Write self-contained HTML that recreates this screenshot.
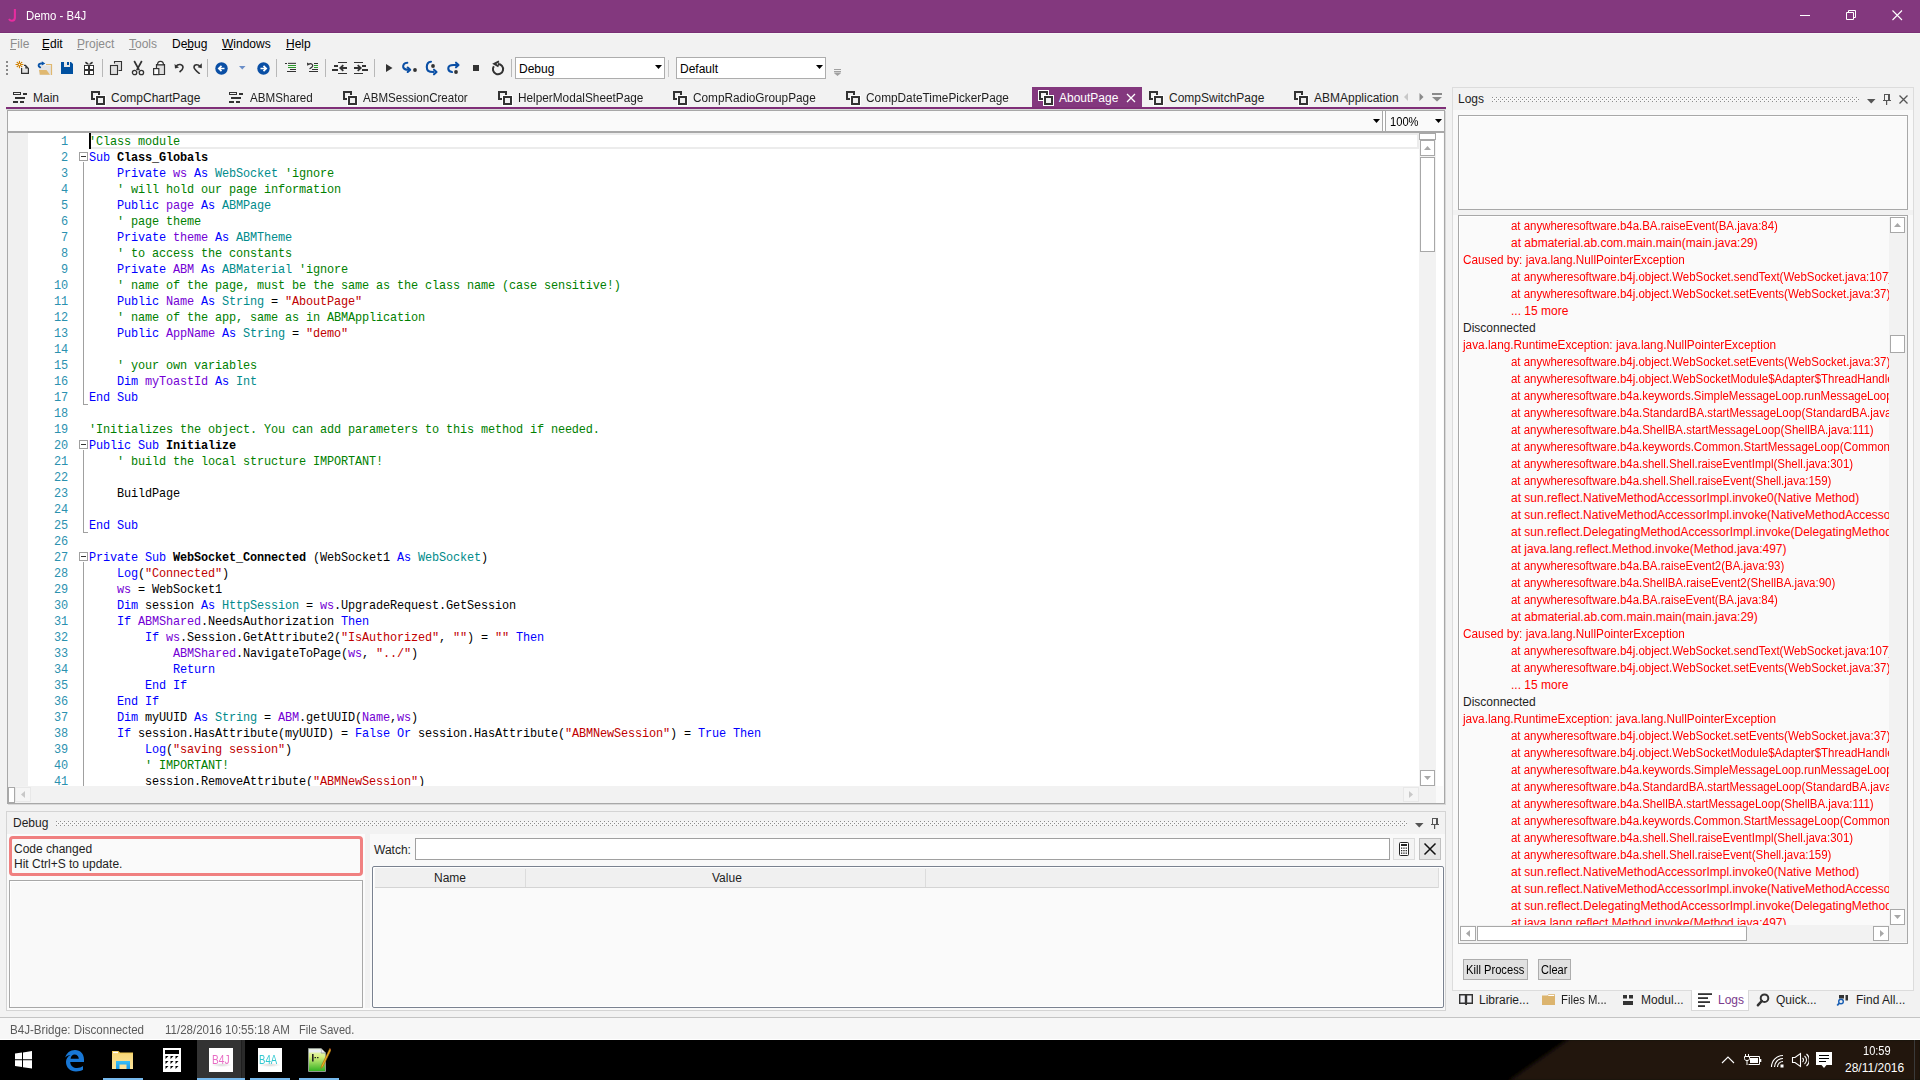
<!DOCTYPE html><html><head><meta charset="utf-8"><title>Demo - B4J</title><style>
*{margin:0;padding:0;box-sizing:border-box}
html,body{width:1920px;height:1080px;overflow:hidden;background:#f2f2f2}
body{position:relative;font-family:"Liberation Sans",sans-serif;font-size:12px;color:#000}
div,span,svg{position:absolute}
.ts{font-family:"Liberation Sans",sans-serif;line-height:1.117;white-space:pre;margin-top:1px}
.tm{font-family:"Liberation Mono",monospace;line-height:1.133;white-space:pre}
.code{left:89px;font-family:"Liberation Mono",monospace;font-size:11.88px;letter-spacing:-0.128px;white-space:pre;height:16px;line-height:16px}
.code i{font-style:normal}
.k{color:#0000ff}.v{color:#7400d4}.t{color:#008b8b}.c{color:#008000}.s{color:#c00000}.b{font-weight:bold;color:#000}.n{color:#000}
.ln{left:20px;width:48px;text-align:right;font-family:"Liberation Mono",monospace;font-size:11.88px;letter-spacing:-0.128px;color:#2b91af;height:16px;line-height:16px;white-space:pre}
.log{font-family:"Liberation Sans",sans-serif;font-size:12px;white-space:pre;height:17px;line-height:17px;color:#ff0000}
</style></head><body>
<div style="left:0px;top:0px;width:1920px;height:33px;background:#83387e"></div>
<div style="left:0px;top:32px;width:1920px;height:1px;background:#7a2f75"></div>
<div style="left:0px;top:33px;width:1920px;height:1px;background:#f6f8f6"></div>
<svg style="left:7px;top:8px" width="12" height="14"><path d="M7.9 1V9.5C7.9 12 6.8 12.7 5 12.7C3.5 12.7 2.6 12 2 11" stroke="#e62d9f" stroke-width="2.1" fill="none"/></svg>
<span class="ts" style="left:26px;top:9.14px;font-size:12px;color:#fff;transform:scaleX(0.95);transform-origin:0 0">Demo - B4J</span>
<svg style="left:1800px;top:15px" width="11" height="1" viewBox="0 0 11 1"><rect x="0" y="0" width="10" height="1" fill="#fff"/></svg><svg style="left:1846px;top:10px" width="11" height="11" viewBox="0 0 11 11"><path d="M0.5 2.5H7.5V9.5H0.5Z M2.5 2.5V0.5H9.5V7.5H7.5" stroke="#fff" fill="none"/></svg><svg style="left:1892px;top:10px" width="11" height="11" viewBox="0 0 11 11"><path d="M0.5 0.5L10 10M10 0.5L0.5 10" stroke="#fff" stroke-width="1.1" fill="none"/></svg>
<span class="ts" style="left:10px;top:37.14px;font-size:12px;color:#8c8c8c">File</span>
<span class="ts" style="left:42px;top:37.14px;font-size:12px;color:#000">Edit</span>
<span class="ts" style="left:77px;top:37.14px;font-size:12px;color:#8c8c8c">Project</span>
<span class="ts" style="left:129px;top:37.14px;font-size:12px;color:#8c8c8c">Tools</span>
<span class="ts" style="left:172px;top:37.14px;font-size:12px;color:#000">Debug</span>
<span class="ts" style="left:222px;top:37.14px;font-size:12px;color:#000">Windows</span>
<span class="ts" style="left:286px;top:37.14px;font-size:12px;color:#000">Help</span>
<div style="left:10px;top:49px;width:6px;height:1px;background:#8c8c8c"></div>
<div style="left:42px;top:49px;width:7px;height:1px;background:#000"></div>
<div style="left:77px;top:49px;width:7px;height:1px;background:#8c8c8c"></div>
<div style="left:129px;top:49px;width:7px;height:1px;background:#8c8c8c"></div>
<div style="left:186px;top:49px;width:7px;height:1px;background:#000"></div>
<div style="left:222px;top:49px;width:11px;height:1px;background:#000"></div>
<div style="left:286px;top:49px;width:8px;height:1px;background:#000"></div>
<div style="left:6px;top:61px;width:2px;height:2px;background:#8a8a8a"></div><div style="left:6px;top:65px;width:2px;height:2px;background:#8a8a8a"></div><div style="left:6px;top:69px;width:2px;height:2px;background:#8a8a8a"></div><div style="left:6px;top:73px;width:2px;height:2px;background:#8a8a8a"></div><svg style="left:15px;top:60px" width="16" height="16" viewBox="0 0 16 16"><g stroke="#d08000" stroke-width="1.1" stroke-linecap="round"><path d="M4.45 1.2V3M4.45 6V7.8M1 4.5H2.8M6.2 4.5H8"/></g><g fill="#d08000"><circle cx="2.3" cy="2.4" r="0.75"/><circle cx="6.6" cy="2.4" r="0.75"/><circle cx="2.3" cy="6.6" r="0.75"/><circle cx="6.6" cy="6.6" r="0.75"/></g><circle cx="4.45" cy="4.5" r="1.4" fill="#fff" stroke="#d08000" stroke-width="1.1"/><path d="M6.6 8.2H13.4V13.4H6.6Z" fill="#e4e4e4"/><path d="M9 5.5H10.5L13.4 8.3" fill="#e4e4e4"/><path d="M6.6 8V13.4H13.4V8.4L10.5 5.4H9" fill="none" stroke="#333" stroke-width="1.2"/><path d="M10.3 5.8L13 8.5H10.3Z" fill="#333"/></svg><svg style="left:37px;top:60px" width="16" height="16" viewBox="0 0 16 16"><path d="M2 5.5H14.5V15H2Z" fill="#e4e4e4"/><path d="M9 4.5H14.5V15" fill="none" stroke="#e0b870" stroke-width="1.2"/><path d="M2 10H9.5L13 14.8H3Z" fill="#e0b870"/><path d="M3.2 7.3C0.8 6.5 1 3.8 4 3.5L5.5 3.4" stroke="#0a54a8" stroke-width="1.9" fill="none" stroke-linecap="round"/><path d="M4.8 1.2L8.3 3.4L4.8 5.6Z" fill="#0a54a8"/></svg><svg style="left:61px;top:62px" width="13" height="13" viewBox="0 0 13 13"><path d="M0 0H10L12 2V12H0Z" fill="#0050a0"/><rect x="3" y="0" width="6" height="5" fill="#e8e8e8"/><rect x="6" y="0" width="2" height="3" fill="#0050a0"/></svg><svg style="left:83px;top:60px" width="12" height="16" viewBox="0 0 12 16"><path d="M6 4.5C4.5 2 2 0.8 2.2 2.8C2.4 4.3 4.5 4.6 6 4.5C7.5 4.6 9.6 4.3 9.8 2.8C10 0.8 7.5 2 6 4.5Z" fill="#333"/><rect x="1" y="5" width="10" height="10" fill="#333"/><rect x="2" y="6" width="3" height="3" fill="#fff"/><rect x="7" y="6" width="3" height="3" fill="#fff"/><rect x="2" y="11" width="3" height="3" fill="#fff"/><rect x="7" y="11" width="3" height="3" fill="#fff"/></svg><div style="left:102px;top:59px;width:1px;height:18px;background:#b8b8b8"></div><svg style="left:109px;top:60px" width="14" height="16" viewBox="0 0 14 16"><path d="M5.5 3.5V1.5H12.5V10.5H9.5" fill="#e0e0e0" stroke="#333" stroke-width="1.1"/><rect x="1.5" y="5.5" width="7" height="9" fill="#e0e0e0" stroke="#333" stroke-width="1.1"/></svg><svg style="left:131px;top:60px" width="14" height="16" viewBox="0 0 14 16"><path d="M3.2 1L8.2 10.2M10.8 1L5.8 10.2" stroke="#333" stroke-width="1.7"/><circle cx="3.6" cy="12.5" r="2.2" fill="none" stroke="#333" stroke-width="1.3"/><circle cx="10.4" cy="12.5" r="2.2" fill="none" stroke="#333" stroke-width="1.3"/></svg><svg style="left:152px;top:60px" width="14" height="16" viewBox="0 0 14 16"><path d="M4.5 8V4.5H12.5V14.5H7" fill="#e0e0e0" stroke="#333" stroke-width="1.2"/><path d="M5.5 4.8C5.5 2.5 6.5 1.3 8.5 1.3C10.5 1.3 11.5 2.5 11.5 4.8Z" fill="#fff" stroke="#333" stroke-width="1.2"/><rect x="1.6" y="8.6" width="5.2" height="6" fill="#fff" stroke="#333" stroke-width="1.2"/></svg><svg style="left:174px;top:62px" width="11" height="11" viewBox="0 0 11 11"><path d="M2 4.5C4 1.5 9 2 9 5.5C9 7.5 7.5 8.5 5.5 10" stroke="#333" stroke-width="1.6" fill="none"/><path d="M0.5 2L1 6.5L5 5.5Z" fill="#333"/></svg><svg style="left:192px;top:62px" width="11" height="12" viewBox="0 0 11 12"><path d="M7.8 4.5C6.5 2.2 2.2 2 2 5.2C2 7 3.5 8.3 7.8 11.8" stroke="#333" stroke-width="1.6" fill="none"/><path d="M9.8 1.2L9.8 6.3L5.6 5.2Z" fill="#333"/></svg><div style="left:207px;top:59px;width:1px;height:18px;background:#b8b8b8"></div><svg style="left:215px;top:62px" width="13" height="13" viewBox="0 0 13 13"><circle cx="6.5" cy="6.5" r="6.2" fill="#0a4fa5"/><path d="M9.5 6.5H4M6.5 3.8L3.8 6.5L6.5 9.2" stroke="#fff" stroke-width="1.7" fill="none"/></svg><svg style="left:239px;top:66px" width="7" height="4" viewBox="0 0 7 4"><path d="M0 0H6.5L3.25 3.5Z" fill="#6a8ec8"/></svg><svg style="left:257px;top:62px" width="13" height="13" viewBox="0 0 13 13"><circle cx="6.5" cy="6.5" r="6.2" fill="#0a4fa5"/><path d="M3.5 6.5H9M6.5 3.8L9.2 6.5L6.5 9.2" stroke="#fff" stroke-width="1.7" fill="none"/></svg><div style="left:276px;top:59px;width:1px;height:18px;background:#b8b8b8"></div><svg style="left:284px;top:62px" width="13" height="11" viewBox="0 0 13 11"><rect x="1" y="1" width="2" height="1" fill="#333"/><rect x="4" y="1" width="8" height="1" fill="#333"/><rect x="4" y="3" width="8" height="1" fill="#2a9a2a"/><rect x="4" y="5" width="8" height="1" fill="#2a9a2a"/><rect x="6" y="7" width="6" height="1" fill="#333"/><rect x="3" y="9" width="9" height="1" fill="#333"/><rect x="4" y="0.7" width="8" height="0.6" fill="#888"/></svg><svg style="left:306px;top:62px" width="12" height="11" viewBox="0 0 12 11"><path d="M3.2 1.8C5.5 1.3 7.2 2.5 6.6 4.3C6.2 5.4 4.5 6.2 3.5 6.8" stroke="#333" stroke-width="1.2" fill="none"/><path d="M1 0.5L1.2 3.8L4.2 2.2Z" fill="#333"/><rect x="8" y="1" width="4" height="1" fill="#333"/><rect x="8" y="3" width="4" height="1" fill="#2a9a2a"/><rect x="8" y="5" width="4" height="1" fill="#2a9a2a"/><rect x="6" y="7" width="6" height="1" fill="#333"/><rect x="3" y="9" width="9" height="1" fill="#333"/></svg><div style="left:325px;top:59px;width:1px;height:18px;background:#b8b8b8"></div><svg style="left:331px;top:61px" width="17" height="14" viewBox="0 0 17 14"><rect x="7" y="1" width="9" height="1" fill="#333"/><rect x="7" y="12" width="9" height="1" fill="#333"/><rect x="3" y="4" width="4" height="2" fill="#333"/><rect x="1" y="8" width="6" height="2" fill="#333"/><path d="M16 7H9.5M12.3 4.2L9.3 7L12.3 9.8" stroke="#333" stroke-width="1.8" fill="none"/></svg><svg style="left:353px;top:61px" width="17" height="14" viewBox="0 0 17 14"><rect x="1" y="1" width="9" height="1" fill="#333"/><rect x="1" y="12" width="9" height="1" fill="#333"/><rect x="9" y="4" width="4" height="2" fill="#333"/><rect x="9" y="8" width="6" height="2" fill="#333"/><path d="M1 7H7.5M4.7 4.2L7.7 7L4.7 9.8" stroke="#333" stroke-width="1.8" fill="none"/></svg><div style="left:374px;top:59px;width:1px;height:18px;background:#b8b8b8"></div><svg style="left:385px;top:63px" width="8" height="10" viewBox="0 0 8 10"><path d="M1 1L7.5 5L1 9Z" fill="#333"/></svg><svg style="left:398px;top:58px" width="64" height="20" viewBox="0 0 64 20"><g stroke="#0a4fa5" stroke-width="2.1" fill="none" stroke-linecap="round" stroke-linejoin="round"><path d="M9.3 4.7C6 4.8 5 7 5.2 9C5.5 11 7.5 11.8 11 11.7"/><path d="M9.7 9.5L12.2 11.7L9.7 14"/><path d="M33 3.7C29.5 4 28.8 6.5 28.8 9C28.8 12.5 30.2 14 35.5 14"/><path d="M36 11.7L38.5 14L36 16.3"/><path d="M54 14C51 13.5 50.2 11.5 50.3 10C50.5 8 52 7 55.5 7H60"/><path d="M58 4.7L60.5 7L58 9.3"/></g><circle cx="17" cy="12" r="1.9" fill="#333"/><circle cx="35" cy="8" r="1.9" fill="#333"/><circle cx="58" cy="14" r="1.9" fill="#333"/></svg><svg style="left:473px;top:65px" width="7" height="7" viewBox="0 0 7 7"><rect width="6" height="6" fill="#333"/></svg><svg style="left:490px;top:60px" width="16" height="17" viewBox="0 0 16 17"><path d="M8 4.1A5.1 5.1 0 1 1 3.82 6.27" stroke="#333" stroke-width="2" fill="none"/><path d="M9 1.4L4.3 3.8L8.6 6.3" stroke="#333" stroke-width="2" fill="none" stroke-linejoin="miter"/></svg><div style="left:511px;top:59px;width:1px;height:18px;background:#b8b8b8"></div>
<div style="left:515px;top:57px;width:150px;height:22px;background:#fff;border:1px solid #adadad"></div>
<span class="ts" style="left:519px;top:62.14px;font-size:12px;">Debug</span>
<svg style="left:655px;top:65px" width="8" height="5"><path d="M0 0H7L3.5 4Z" fill="#000"/></svg>
<div style="left:668px;top:60px;width:1px;height:17px;background:#c8c8c8"></div>
<div style="left:676px;top:57px;width:150px;height:22px;background:#fff;border:1px solid #adadad"></div>
<span class="ts" style="left:680px;top:62.14px;font-size:12px;">Default</span>
<svg style="left:816px;top:65px" width="8" height="5"><path d="M0 0H7L3.5 4Z" fill="#000"/></svg>
<svg style="left:834px;top:69px" width="8" height="7"><path d="M0 0.5H7M0 2.5H7M0.5 4H6.5L3.5 6.5Z" stroke="#a0a0a0" stroke-width="1" fill="#a0a0a0"/></svg>
<div style="left:1032px;top:87px;width:110px;height:20px;background:#83387e"></div><svg style="left:13px;top:92px" width="15" height="12" viewBox="0 0 15 12"><rect x="0.5" y="0.5" width="7" height="2" fill="none" stroke="#333"/><rect x="10" y="1" width="4" height="2" fill="#333"/><rect x="2" y="5" width="10" height="2" fill="#333"/><rect x="0" y="9" width="5" height="2" fill="#333"/><rect x="7" y="9" width="4" height="2" fill="#333"/></svg><span class="ts" style="left:33px;top:91.14px;font-size:12px;color:#1e1e1e">Main</span><svg style="left:90px;top:90px" width="16" height="16" viewBox="0 0 16 16"><rect x="2" y="2" width="7" height="7" fill="#f0f0f0" stroke="#333" stroke-width="2"/><rect x="5" y="5" width="11" height="11" fill="#fff"/><rect x="7" y="7" width="7" height="7" fill="#f0f0f0" stroke="#333" stroke-width="2"/></svg><span class="ts" style="left:111px;top:91.14px;font-size:12px;color:#1e1e1e">CompChartPage</span><svg style="left:229px;top:92px" width="15" height="12" viewBox="0 0 15 12"><rect x="0.5" y="0.5" width="7" height="2" fill="none" stroke="#333"/><rect x="10" y="1" width="4" height="2" fill="#333"/><rect x="2" y="5" width="10" height="2" fill="#333"/><rect x="0" y="9" width="5" height="2" fill="#333"/><rect x="7" y="9" width="4" height="2" fill="#333"/></svg><span class="ts" style="left:250px;top:91.14px;font-size:12px;color:#1e1e1e;transform:scaleX(0.969);transform-origin:0 0">ABMShared</span><svg style="left:342px;top:90px" width="16" height="16" viewBox="0 0 16 16"><rect x="2" y="2" width="7" height="7" fill="#f0f0f0" stroke="#333" stroke-width="2"/><rect x="5" y="5" width="11" height="11" fill="#fff"/><rect x="7" y="7" width="7" height="7" fill="#f0f0f0" stroke="#333" stroke-width="2"/></svg><span class="ts" style="left:363px;top:91.14px;font-size:12px;color:#1e1e1e;transform:scaleX(0.963);transform-origin:0 0">ABMSessionCreator</span><svg style="left:497px;top:90px" width="16" height="16" viewBox="0 0 16 16"><rect x="2" y="2" width="7" height="7" fill="#f0f0f0" stroke="#333" stroke-width="2"/><rect x="5" y="5" width="11" height="11" fill="#fff"/><rect x="7" y="7" width="7" height="7" fill="#f0f0f0" stroke="#333" stroke-width="2"/></svg><span class="ts" style="left:518px;top:91.14px;font-size:12px;color:#1e1e1e;transform:scaleX(0.984);transform-origin:0 0">HelperModalSheetPage</span><svg style="left:672px;top:90px" width="16" height="16" viewBox="0 0 16 16"><rect x="2" y="2" width="7" height="7" fill="#f0f0f0" stroke="#333" stroke-width="2"/><rect x="5" y="5" width="11" height="11" fill="#fff"/><rect x="7" y="7" width="7" height="7" fill="#f0f0f0" stroke="#333" stroke-width="2"/></svg><span class="ts" style="left:693px;top:91.14px;font-size:12px;color:#1e1e1e;transform:scaleX(0.984);transform-origin:0 0">CompRadioGroupPage</span><svg style="left:845px;top:90px" width="16" height="16" viewBox="0 0 16 16"><rect x="2" y="2" width="7" height="7" fill="#f0f0f0" stroke="#333" stroke-width="2"/><rect x="5" y="5" width="11" height="11" fill="#fff"/><rect x="7" y="7" width="7" height="7" fill="#f0f0f0" stroke="#333" stroke-width="2"/></svg><span class="ts" style="left:866px;top:91.14px;font-size:12px;color:#1e1e1e;transform:scaleX(0.986);transform-origin:0 0">CompDateTimePickerPage</span><svg style="left:1037px;top:90px" width="17" height="17" viewBox="0 0 17 17"><rect x="1" y="0" width="11" height="11" fill="#fff"/><rect x="6" y="5" width="11" height="11" fill="#fff"/><rect x="3" y="2" width="7" height="7" fill="#f0f0f0" stroke="#333" stroke-width="2"/><rect x="6" y="5" width="11" height="11" fill="#fff"/><rect x="8" y="7" width="7" height="7" fill="#f0f0f0" stroke="#333" stroke-width="2"/></svg><span class="ts" style="left:1059px;top:91.14px;font-size:12px;color:#fff">AboutPage</span><svg style="left:1148px;top:90px" width="16" height="16" viewBox="0 0 16 16"><rect x="2" y="2" width="7" height="7" fill="#f0f0f0" stroke="#333" stroke-width="2"/><rect x="5" y="5" width="11" height="11" fill="#fff"/><rect x="7" y="7" width="7" height="7" fill="#f0f0f0" stroke="#333" stroke-width="2"/></svg><span class="ts" style="left:1169px;top:91.14px;font-size:12px;color:#1e1e1e">CompSwitchPage</span><svg style="left:1293px;top:90px" width="16" height="16" viewBox="0 0 16 16"><rect x="2" y="2" width="7" height="7" fill="#f0f0f0" stroke="#333" stroke-width="2"/><rect x="5" y="5" width="11" height="11" fill="#fff"/><rect x="7" y="7" width="7" height="7" fill="#f0f0f0" stroke="#333" stroke-width="2"/></svg><div style="left:1314px;top:89px;width:85px;height:17px;overflow:hidden"><span class="ts" style="left:0;top:2.14px;font-size:12px;color:#1e1e1e">ABMApplication</span></div><svg style="left:1126px;top:93px" width="10" height="10" viewBox="0 0 10 10"><path d="M1 1L9 9M9 1L1 9" stroke="#fff" stroke-width="1.3"/></svg><svg style="left:1403px;top:93px" width="6" height="8" viewBox="0 0 6 8"><path d="M5 0V8L1 4Z" fill="#c8c8c8"/></svg><svg style="left:1419px;top:93px" width="6" height="8" viewBox="0 0 6 8"><path d="M0.5 0V8L4.5 4Z" fill="#8a8a8a"/></svg><svg style="left:1432px;top:93px" width="11" height="9" viewBox="0 0 11 9"><rect x="0" y="0" width="10" height="2" fill="#8a8a8a"/><path d="M0 4H10L5 8.5Z" fill="#8a8a8a"/></svg>
<div style="left:6px;top:107px;width:1440px;height:2px;background:#7f2f78"></div>
<div style="left:6px;top:109px;width:1440px;height:1px;background:#d6dad6"></div>
<div style="left:7px;top:110px;width:1438px;height:694px;background:#fafafa;border:1px solid #a8a8a8;box-shadow:1px 1px 0 #d8d8d8"></div>
<div style="left:8px;top:111px;width:1435px;height:20px;background:#fafafa"></div>
<div style="left:8px;top:131px;width:1436px;height:2px;background:#a8a8a8"></div>
<div style="left:1382px;top:111px;width:4px;height:20px;background:#fff;border-left:1px solid #a8a8a8;border-right:1px solid #a8a8a8"></div>
<svg style="left:1373px;top:119px" width="8" height="5"><path d="M0 0H7L3.5 4Z" fill="#000"/></svg>
<svg style="left:1435px;top:119px" width="8" height="5"><path d="M0 0H7L3.5 4Z" fill="#000"/></svg>
<span class="ts" style="left:1389.5px;top:115.14px;font-size:12px;transform:scaleX(0.93);transform-origin:0 0">100%</span>
<div style="left:8px;top:133px;width:1435px;height:653px;background:#fff"></div>
<div style="left:8px;top:133px;width:20px;height:653px;background:#f0f0f0"></div>
<div style="left:91px;top:133px;width:1328px;height:16px;border:2px solid #ececec;border-left:none"></div>
<div style="left:89px;top:133px;width:2px;height:16px;background:#000"></div>
<span class="ln" style="top:134.0px">1</span>
<span class="code" style="top:134.0px"><i class="c">'Class module</i></span>
<span class="ln" style="top:150.0px">2</span>
<span class="code" style="top:150.0px"><i class="k">Sub </i><i class="b">Class_Globals</i></span>
<span class="ln" style="top:166.0px">3</span>
<span class="code" style="top:166.0px"><i class="k">    Private </i><i class="v">ws </i><i class="k">As </i><i class="t">WebSocket </i><i class="c">'ignore</i></span>
<span class="ln" style="top:182.0px">4</span>
<span class="code" style="top:182.0px"><i class="c">    ' will hold our page information</i></span>
<span class="ln" style="top:198.0px">5</span>
<span class="code" style="top:198.0px"><i class="k">    Public </i><i class="v">page </i><i class="k">As </i><i class="t">ABMPage</i></span>
<span class="ln" style="top:214.0px">6</span>
<span class="code" style="top:214.0px"><i class="c">    ' page theme</i></span>
<span class="ln" style="top:230.0px">7</span>
<span class="code" style="top:230.0px"><i class="k">    Private </i><i class="v">theme </i><i class="k">As </i><i class="t">ABMTheme</i></span>
<span class="ln" style="top:246.0px">8</span>
<span class="code" style="top:246.0px"><i class="c">    ' to access the constants</i></span>
<span class="ln" style="top:262.0px">9</span>
<span class="code" style="top:262.0px"><i class="k">    Private </i><i class="v">ABM </i><i class="k">As </i><i class="t">ABMaterial </i><i class="c">'ignore</i></span>
<span class="ln" style="top:278.0px">10</span>
<span class="code" style="top:278.0px"><i class="c">    ' name of the page, must be the same as the class name (case sensitive!)</i></span>
<span class="ln" style="top:294.0px">11</span>
<span class="code" style="top:294.0px"><i class="k">    Public </i><i class="v">Name </i><i class="k">As </i><i class="t">String </i><i class="n">= </i><i class="s">"AboutPage"</i></span>
<span class="ln" style="top:310.0px">12</span>
<span class="code" style="top:310.0px"><i class="c">    ' name of the app, same as in ABMApplication</i></span>
<span class="ln" style="top:326.0px">13</span>
<span class="code" style="top:326.0px"><i class="k">    Public </i><i class="v">AppName </i><i class="k">As </i><i class="t">String </i><i class="n">= </i><i class="s">"demo"</i></span>
<span class="ln" style="top:342.0px">14</span>
<span class="ln" style="top:358.0px">15</span>
<span class="code" style="top:358.0px"><i class="c">    ' your own variables</i></span>
<span class="ln" style="top:374.0px">16</span>
<span class="code" style="top:374.0px"><i class="k">    Dim </i><i class="v">myToastId </i><i class="k">As </i><i class="t">Int</i></span>
<span class="ln" style="top:390.0px">17</span>
<span class="code" style="top:390.0px"><i class="k">End Sub</i></span>
<span class="ln" style="top:406.0px">18</span>
<span class="ln" style="top:422.0px">19</span>
<span class="code" style="top:422.0px"><i class="c">'Initializes the object. You can add parameters to this method if needed.</i></span>
<span class="ln" style="top:438.0px">20</span>
<span class="code" style="top:438.0px"><i class="k">Public Sub </i><i class="b">Initialize</i></span>
<span class="ln" style="top:454.0px">21</span>
<span class="code" style="top:454.0px"><i class="c">    ' build the local structure IMPORTANT!</i></span>
<span class="ln" style="top:470.0px">22</span>
<span class="ln" style="top:486.0px">23</span>
<span class="code" style="top:486.0px"><i class="n">    BuildPage</i></span>
<span class="ln" style="top:502.0px">24</span>
<span class="ln" style="top:518.0px">25</span>
<span class="code" style="top:518.0px"><i class="k">End Sub</i></span>
<span class="ln" style="top:534.0px">26</span>
<span class="ln" style="top:550.0px">27</span>
<span class="code" style="top:550.0px"><i class="k">Private Sub </i><i class="b">WebSocket_Connected</i><i class="n"> (WebSocket1 </i><i class="k">As </i><i class="t">WebSocket</i><i class="n">)</i></span>
<span class="ln" style="top:566.0px">28</span>
<span class="code" style="top:566.0px"><i class="k">    Log</i><i class="n">(</i><i class="s">"Connected"</i><i class="n">)</i></span>
<span class="ln" style="top:582.0px">29</span>
<span class="code" style="top:582.0px"><i class="v">    ws </i><i class="n">= WebSocket1</i></span>
<span class="ln" style="top:598.0px">30</span>
<span class="code" style="top:598.0px"><i class="k">    Dim </i><i class="n">session </i><i class="k">As </i><i class="t">HttpSession </i><i class="n">= </i><i class="v">ws</i><i class="n">.UpgradeRequest.GetSession</i></span>
<span class="ln" style="top:614.0px">31</span>
<span class="code" style="top:614.0px"><i class="k">    If </i><i class="v">ABMShared</i><i class="n">.NeedsAuthorization </i><i class="k">Then</i></span>
<span class="ln" style="top:630.0px">32</span>
<span class="code" style="top:630.0px"><i class="k">        If </i><i class="v">ws</i><i class="n">.Session.GetAttribute2(</i><i class="s">"IsAuthorized"</i><i class="n">, </i><i class="s">""</i><i class="n">) = </i><i class="s">""</i><i class="k"> Then</i></span>
<span class="ln" style="top:646.0px">33</span>
<span class="code" style="top:646.0px"><i class="v">            ABMShared</i><i class="n">.NavigateToPage(</i><i class="v">ws</i><i class="n">, </i><i class="s">"../"</i><i class="n">)</i></span>
<span class="ln" style="top:662.0px">34</span>
<span class="code" style="top:662.0px"><i class="k">            Return</i></span>
<span class="ln" style="top:678.0px">35</span>
<span class="code" style="top:678.0px"><i class="k">        End If</i></span>
<span class="ln" style="top:694.0px">36</span>
<span class="code" style="top:694.0px"><i class="k">    End If</i></span>
<span class="ln" style="top:710.0px">37</span>
<span class="code" style="top:710.0px"><i class="k">    Dim </i><i class="n">myUUID </i><i class="k">As </i><i class="t">String </i><i class="n">= </i><i class="v">ABM</i><i class="n">.getUUID(</i><i class="v">Name</i><i class="n">,</i><i class="v">ws</i><i class="n">)</i></span>
<span class="ln" style="top:726.0px">38</span>
<span class="code" style="top:726.0px"><i class="k">    If </i><i class="n">session.HasAttribute(myUUID) = </i><i class="k">False Or </i><i class="n">session.HasAttribute(</i><i class="s">"ABMNewSession"</i><i class="n">) = </i><i class="k">True Then</i></span>
<span class="ln" style="top:742.0px">39</span>
<span class="code" style="top:742.0px"><i class="k">        Log</i><i class="n">(</i><i class="s">"saving session"</i><i class="n">)</i></span>
<span class="ln" style="top:758.0px">40</span>
<span class="code" style="top:758.0px"><i class="c">        ' IMPORTANT!</i></span>
<span class="ln" style="top:774.0px">41</span>
<span class="code" style="top:774.0px"><i class="n">        session.RemoveAttribute(</i><i class="s">"ABMNewSession"</i><i class="n">)</i></span>
<div style="left:79px;top:152px;width:9px;height:9px;border:1px solid #a0a0a0;background:#fff"></div>
<div style="left:81px;top:156px;width:5px;height:1px;background:#333"></div>
<div style="left:83px;top:162px;width:1px;height:243px;background:#a0a0a0"></div>
<div style="left:83px;top:404px;width:5px;height:1px;background:#a0a0a0"></div>
<div style="left:79px;top:440px;width:9px;height:9px;border:1px solid #a0a0a0;background:#fff"></div>
<div style="left:81px;top:444px;width:5px;height:1px;background:#333"></div>
<div style="left:83px;top:450px;width:1px;height:83px;background:#a0a0a0"></div>
<div style="left:83px;top:532px;width:5px;height:1px;background:#a0a0a0"></div>
<div style="left:79px;top:552px;width:9px;height:9px;border:1px solid #a0a0a0;background:#fff"></div>
<div style="left:81px;top:556px;width:5px;height:1px;background:#333"></div>
<div style="left:83px;top:562px;width:1px;height:224px;background:#a0a0a0"></div>
<div style="left:1419px;top:133px;width:17px;height:653px;background:#f2f2f2"></div>
<div style="left:1436px;top:133px;width:7px;height:653px;background:#fff"></div>
<div style="left:1419px;top:133px;width:17px;height:7px;background:#fff;border:1px solid #a8a8a8"></div>
<div style="left:1420px;top:140px;width:15px;height:16px;background:#fff;border:1px solid #a8a8a8"></div>
<svg style="left:1424px;top:146px" width="7" height="4"><path d="M0 4L3.5 0L7 4Z" fill="#a8a8a8"/></svg>
<div style="left:1420px;top:157px;width:15px;height:95px;background:#fff;border:1px solid #a8a8a8"></div>
<div style="left:1420px;top:770px;width:15px;height:16px;background:#fff;border:1px solid #a8a8a8"></div>
<svg style="left:1424px;top:776px" width="7" height="4"><path d="M0 0L3.5 4L7 0Z" fill="#a8a8a8"/></svg>
<div style="left:8px;top:786px;width:1428px;height:17px;background:#f2f2f2"></div>
<div style="left:8px;top:787px;width:7px;height:16px;background:#fff;border:1px solid #a8a8a8"></div>
<div style="left:15px;top:787px;width:16px;height:15px;background:#f5f5f5;border:1px solid #e8e8e8"></div>
<svg style="left:21px;top:791px" width="4" height="7"><path d="M4 0L0 3.5L4 7Z" fill="#c8c8c8"/></svg>
<div style="left:1403px;top:787px;width:16px;height:15px;background:#f5f5f5;border:1px solid #e8e8e8"></div>
<svg style="left:1409px;top:791px" width="4" height="7"><path d="M0 0L4 3.5L0 7Z" fill="#c8c8c8"/></svg>
<div style="left:6px;top:811px;width:1440px;height:200px;background:#fbfbfb;border:1px solid #d4d4d4"></div><div style="left:7px;top:812px;width:1438px;height:22px;background:#f2f2f2"></div><span class="ts" style="left:13px;top:816.14px;font-size:12px;color:#1e1e1e">Debug</span><svg style="left:55px;top:820px" width="1353" height="7"><defs><pattern id="dpd" x="1" y="1" width="4" height="4" patternUnits="userSpaceOnUse"><rect x="-1" y="-1" width="3" height="3" fill="#f7f7f7"/><rect x="1" y="1" width="3" height="3" fill="#f7f7f7"/><rect x="0" y="0" width="1" height="1" fill="#8c8c8c"/><rect x="2" y="2" width="1" height="1" fill="#8c8c8c"/></pattern></defs><rect x="1" y="1" width="1351" height="5" fill="url(#dpd)"/></svg><svg style="left:1415px;top:823px" width="9" height="5" viewBox="0 0 9 5"><path d="M0 0H8.5L4.25 4.5Z" fill="#555"/></svg><svg style="left:1431px;top:818px" width="8" height="11" viewBox="0 0 8 11"><path d="M1.5 0V6" stroke="#555" stroke-width="1"/><rect x="1" y="0" width="5" height="1" fill="#555"/><rect x="5" y="0" width="2" height="6" fill="#555"/><rect x="0" y="6" width="8" height="1" fill="#555"/><rect x="3" y="7" width="1.2" height="4" fill="#555"/></svg><div style="left:9px;top:836px;width:354px;height:40px;background:#fafafa;border:3px solid #f08080;border-radius:4px"></div><span class="ts" style="left:14px;top:842.14px;font-size:12px;color:#1e1e1e">Code changed</span><span class="ts" style="left:14px;top:857.14px;font-size:12px;color:#1e1e1e">Hit Ctrl+S to update.</span><div style="left:9px;top:880px;width:354px;height:128px;background:#f9f9f9;border:1px solid #a8a8a8;box-shadow:inset 1px 1px 0 #fff"></div><div style="left:365px;top:834px;width:5px;height:174px;background:#f2f2f2"></div><div style="left:370px;top:834px;width:1075px;height:176px;background:#f9f9f9"></div><span class="ts" style="left:374px;top:843.14px;font-size:12px;color:#1e1e1e">Watch:</span><div style="left:415px;top:838px;width:975px;height:22px;background:#fff;border:1px solid #a0a0a0"></div><div style="left:1393px;top:838px;width:22px;height:22px;background:#f4f4f4;border:1px solid #dcdcdc"></div><svg style="left:1399px;top:842px" width="10" height="14" viewBox="0 0 10 14"><rect x="0.5" y="0.5" width="9" height="13" rx="1" fill="#fff" stroke="#222"/><rect x="2" y="2" width="6" height="2" fill="#222"/><g fill="#222"><rect x="2" y="5.5" width="1.3" height="1.3"/><rect x="4.3" y="5.5" width="1.3" height="1.3"/><rect x="6.6" y="5.5" width="1.3" height="1.3"/><rect x="2" y="8" width="1.3" height="1.3"/><rect x="4.3" y="8" width="1.3" height="1.3"/><rect x="6.6" y="8" width="1.3" height="1.3"/><rect x="2" y="10.5" width="1.3" height="1.3"/><rect x="4.3" y="10.5" width="1.3" height="1.3"/><rect x="6.6" y="10.5" width="1.3" height="1.3"/></g></svg><div style="left:1419px;top:838px;width:22px;height:22px;background:#e6e6e6;border:1px solid #c0c0c0"></div><svg style="left:1423px;top:842px" width="14" height="14" viewBox="0 0 14 14"><path d="M1.5 1.5L12.5 12.5M12.5 1.5L1.5 12.5" stroke="#111" stroke-width="1.5"/></svg><div style="left:372px;top:866px;width:1072px;height:142px;background:#fafafa;border:1px solid #7a8290;border-radius:2px;box-shadow:inset 1px 1px 0 #fff,inset -1px -1px 0 #fff"></div><div style="left:375px;top:868px;width:1064px;height:20px;background:#f0f0f0;border-bottom:1px solid #d4d4d4"></div><div style="left:1438px;top:868px;width:1px;height:20px;background:#dcdcdc"></div><div style="left:525px;top:869px;width:1px;height:18px;background:#dcdcdc"></div><div style="left:925px;top:869px;width:1px;height:18px;background:#dcdcdc"></div><span class="ts" style="left:434px;top:871.14px;font-size:12px;color:#1e1e1e">Name</span><span class="ts" style="left:712px;top:871.14px;font-size:12px;color:#1e1e1e">Value</span>
<div style="left:1452px;top:87px;width:462px;height:904px;background:#f9f9f9;border:1px solid #dcdcdc"></div>
<div style="left:1453px;top:88px;width:460px;height:22px;background:#f2f2f2"></div>
<span class="ts" style="left:1458px;top:92.14px;font-size:12px;color:#1e1e1e">Logs</span>
<svg style="left:1491px;top:96px" width="369" height="7"><defs><pattern id="dpl" x="1" y="1" width="4" height="4" patternUnits="userSpaceOnUse"><rect x="-1" y="-1" width="3" height="3" fill="#f7f7f7"/><rect x="1" y="1" width="3" height="3" fill="#f7f7f7"/><rect x="0" y="0" width="1" height="1" fill="#8c8c8c"/><rect x="2" y="2" width="1" height="1" fill="#8c8c8c"/></pattern></defs><rect x="1" y="1" width="367" height="5" fill="url(#dpl)"/></svg>
<svg style="left:1867px;top:99px" width="9" height="5" viewBox="0 0 9 5"><path d="M0 0H8.5L4.25 4.5Z" fill="#555"/></svg>
<svg style="left:1883px;top:94px" width="8" height="11" viewBox="0 0 8 11"><path d="M1.5 0V6" stroke="#555" stroke-width="1"/><rect x="1" y="0" width="5" height="1" fill="#555"/><rect x="5" y="0" width="2" height="6" fill="#555"/><rect x="0" y="6" width="8" height="1" fill="#555"/><rect x="3" y="7" width="1.2" height="4" fill="#555"/></svg>
<svg style="left:1899px;top:95px" width="9" height="9" viewBox="0 0 9 9"><path d="M0.5 0.5L8.5 8.5M8.5 0.5L0.5 8.5" stroke="#555" stroke-width="1.3"/></svg>
<div style="left:1458px;top:115px;width:450px;height:95px;background:#fafafa;border:1px solid #a8a8a8;box-shadow:inset 1px 1px 0 #fff"></div>
<div style="left:1453px;top:210px;width:460px;height:5px;background:#f2f2f2"></div>
<div style="left:1458px;top:215px;width:450px;height:729px;background:#fafafa;border:1px solid #a8a8a8;box-shadow:inset 1px 1px 0 #fff"></div>
<div style="left:1460px;top:217px;width:429px;height:708px;overflow:hidden">
<span class="log" style="left:51px;top:0.5px;color:#ff0000;transform:scaleX(0.955);transform-origin:0 0">at anywheresoftware.b4a.BA.raiseEvent(BA.java:84)</span>
<span class="log" style="left:51px;top:17.5px;color:#ff0000">at abmaterial.ab.com.main.main(main.java:29)</span>
<span class="log" style="left:3px;top:34.5px;color:#ff0000;transform:scaleX(0.978);transform-origin:0 0">Caused by: java.lang.NullPointerException</span>
<span class="log" style="left:51px;top:51.5px;color:#ff0000;transform:scaleX(0.955);transform-origin:0 0">at anywheresoftware.b4j.object.WebSocket.sendText(WebSocket.java:107)</span>
<span class="log" style="left:51px;top:68.5px;color:#ff0000;transform:scaleX(0.955);transform-origin:0 0">at anywheresoftware.b4j.object.WebSocket.setEvents(WebSocket.java:37)</span>
<span class="log" style="left:51px;top:85.5px;color:#ff0000">... 15 more</span>
<span class="log" style="left:3px;top:102.5px;color:#1e1e1e">Disconnected</span>
<span class="log" style="left:3px;top:119.5px;color:#ff0000;transform:scaleX(0.984);transform-origin:0 0">java.lang.RuntimeException: java.lang.NullPointerException</span>
<span class="log" style="left:51px;top:136.5px;color:#ff0000;transform:scaleX(0.955);transform-origin:0 0">at anywheresoftware.b4j.object.WebSocket.setEvents(WebSocket.java:37)</span>
<span class="log" style="left:51px;top:153.5px;color:#ff0000;transform:scaleX(0.955);transform-origin:0 0">at anywheresoftware.b4j.object.WebSocketModule$Adapter$ThreadHandler.run(WebSocketModule.java:1)</span>
<span class="log" style="left:51px;top:170.5px;color:#ff0000;transform:scaleX(0.955);transform-origin:0 0">at anywheresoftware.b4a.keywords.SimpleMessageLoop.runMessageLoop(SimpleMessageLoop.java:30)</span>
<span class="log" style="left:51px;top:187.5px;color:#ff0000;transform:scaleX(0.955);transform-origin:0 0">at anywheresoftware.b4a.StandardBA.startMessageLoop(StandardBA.java:26)</span>
<span class="log" style="left:51px;top:204.5px;color:#ff0000;transform:scaleX(0.955);transform-origin:0 0">at anywheresoftware.b4a.ShellBA.startMessageLoop(ShellBA.java:111)</span>
<span class="log" style="left:51px;top:221.5px;color:#ff0000;transform:scaleX(0.955);transform-origin:0 0">at anywheresoftware.b4a.keywords.Common.StartMessageLoop(Common.java:153)</span>
<span class="log" style="left:51px;top:238.5px;color:#ff0000;transform:scaleX(0.955);transform-origin:0 0">at anywheresoftware.b4a.shell.Shell.raiseEventImpl(Shell.java:301)</span>
<span class="log" style="left:51px;top:255.5px;color:#ff0000;transform:scaleX(0.955);transform-origin:0 0">at anywheresoftware.b4a.shell.Shell.raiseEvent(Shell.java:159)</span>
<span class="log" style="left:51px;top:272.5px;color:#ff0000">at sun.reflect.NativeMethodAccessorImpl.invoke0(Native Method)</span>
<span class="log" style="left:51px;top:289.5px;color:#ff0000">at sun.reflect.NativeMethodAccessorImpl.invoke(NativeMethodAccessorImpl.java:62)</span>
<span class="log" style="left:51px;top:306.5px;color:#ff0000">at sun.reflect.DelegatingMethodAccessorImpl.invoke(DelegatingMethodAccessorImpl.java:43)</span>
<span class="log" style="left:51px;top:323.5px;color:#ff0000">at java.lang.reflect.Method.invoke(Method.java:497)</span>
<span class="log" style="left:51px;top:340.5px;color:#ff0000;transform:scaleX(0.955);transform-origin:0 0">at anywheresoftware.b4a.BA.raiseEvent2(BA.java:93)</span>
<span class="log" style="left:51px;top:357.5px;color:#ff0000;transform:scaleX(0.955);transform-origin:0 0">at anywheresoftware.b4a.ShellBA.raiseEvent2(ShellBA.java:90)</span>
<span class="log" style="left:51px;top:374.5px;color:#ff0000;transform:scaleX(0.955);transform-origin:0 0">at anywheresoftware.b4a.BA.raiseEvent(BA.java:84)</span>
<span class="log" style="left:51px;top:391.5px;color:#ff0000">at abmaterial.ab.com.main.main(main.java:29)</span>
<span class="log" style="left:3px;top:408.5px;color:#ff0000;transform:scaleX(0.978);transform-origin:0 0">Caused by: java.lang.NullPointerException</span>
<span class="log" style="left:51px;top:425.5px;color:#ff0000;transform:scaleX(0.955);transform-origin:0 0">at anywheresoftware.b4j.object.WebSocket.sendText(WebSocket.java:107)</span>
<span class="log" style="left:51px;top:442.5px;color:#ff0000;transform:scaleX(0.955);transform-origin:0 0">at anywheresoftware.b4j.object.WebSocket.setEvents(WebSocket.java:37)</span>
<span class="log" style="left:51px;top:459.5px;color:#ff0000">... 15 more</span>
<span class="log" style="left:3px;top:476.5px;color:#1e1e1e">Disconnected</span>
<span class="log" style="left:3px;top:493.5px;color:#ff0000;transform:scaleX(0.984);transform-origin:0 0">java.lang.RuntimeException: java.lang.NullPointerException</span>
<span class="log" style="left:51px;top:510.5px;color:#ff0000;transform:scaleX(0.955);transform-origin:0 0">at anywheresoftware.b4j.object.WebSocket.setEvents(WebSocket.java:37)</span>
<span class="log" style="left:51px;top:527.5px;color:#ff0000;transform:scaleX(0.955);transform-origin:0 0">at anywheresoftware.b4j.object.WebSocketModule$Adapter$ThreadHandler.run(WebSocketModule.java:1)</span>
<span class="log" style="left:51px;top:544.5px;color:#ff0000;transform:scaleX(0.955);transform-origin:0 0">at anywheresoftware.b4a.keywords.SimpleMessageLoop.runMessageLoop(SimpleMessageLoop.java:30)</span>
<span class="log" style="left:51px;top:561.5px;color:#ff0000;transform:scaleX(0.955);transform-origin:0 0">at anywheresoftware.b4a.StandardBA.startMessageLoop(StandardBA.java:26)</span>
<span class="log" style="left:51px;top:578.5px;color:#ff0000;transform:scaleX(0.955);transform-origin:0 0">at anywheresoftware.b4a.ShellBA.startMessageLoop(ShellBA.java:111)</span>
<span class="log" style="left:51px;top:595.5px;color:#ff0000;transform:scaleX(0.955);transform-origin:0 0">at anywheresoftware.b4a.keywords.Common.StartMessageLoop(Common.java:153)</span>
<span class="log" style="left:51px;top:612.5px;color:#ff0000;transform:scaleX(0.955);transform-origin:0 0">at anywheresoftware.b4a.shell.Shell.raiseEventImpl(Shell.java:301)</span>
<span class="log" style="left:51px;top:629.5px;color:#ff0000;transform:scaleX(0.955);transform-origin:0 0">at anywheresoftware.b4a.shell.Shell.raiseEvent(Shell.java:159)</span>
<span class="log" style="left:51px;top:646.5px;color:#ff0000">at sun.reflect.NativeMethodAccessorImpl.invoke0(Native Method)</span>
<span class="log" style="left:51px;top:663.5px;color:#ff0000">at sun.reflect.NativeMethodAccessorImpl.invoke(NativeMethodAccessorImpl.java:62)</span>
<span class="log" style="left:51px;top:680.5px;color:#ff0000">at sun.reflect.DelegatingMethodAccessorImpl.invoke(DelegatingMethodAccessorImpl.java:43)</span>
<span class="log" style="left:51px;top:697.5px;color:#ff0000">at java.lang.reflect.Method.invoke(Method.java:497)</span>
</div>
<div style="left:1889px;top:217px;width:18px;height:725px;background:#f2f2f2"></div>
<div style="left:1890px;top:217px;width:15px;height:16px;background:#fff;border:1px solid #a8a8a8"></div>
<svg style="left:1894px;top:223px" width="7" height="4"><path d="M0 4L3.5 0L7 4Z" fill="#a8a8a8"/></svg>
<div style="left:1890px;top:335px;width:15px;height:18px;background:#fff;border:1px solid #a8a8a8"></div>
<div style="left:1890px;top:909px;width:15px;height:16px;background:#fff;border:1px solid #a8a8a8"></div>
<svg style="left:1894px;top:915px" width="7" height="4"><path d="M0 0L3.5 4L7 0Z" fill="#a8a8a8"/></svg>
<div style="left:1460px;top:925px;width:429px;height:18px;background:#f2f2f2"></div>
<div style="left:1460px;top:926px;width:16px;height:15px;background:#fff;border:1px solid #a8a8a8"></div>
<svg style="left:1466px;top:930px" width="4" height="7"><path d="M4 0L0 3.5L4 7Z" fill="#a8a8a8"/></svg>
<div style="left:1477px;top:926px;width:270px;height:15px;background:#fff;border:1px solid #a8a8a8"></div>
<div style="left:1873px;top:926px;width:16px;height:15px;background:#fff;border:1px solid #a8a8a8"></div>
<svg style="left:1880px;top:930px" width="4" height="7"><path d="M0 0L4 3.5L0 7Z" fill="#a8a8a8"/></svg>
<div style="left:1463px;top:959px;width:65px;height:21px;background:#e1e1e1;border:1px solid #adadad"></div>
<span class="ts" style="left:1466px;top:963.14px;font-size:12px;transform:scaleX(0.93);transform-origin:0 0">Kill Process</span>
<div style="left:1538px;top:959px;width:33px;height:21px;background:#e1e1e1;border:1px solid #adadad"></div>
<span class="ts" style="left:1541px;top:963.14px;font-size:12px;transform:scaleX(0.92);transform-origin:0 0">Clear</span>
<div style="left:1691px;top:990px;width:58px;height:21px;background:#fff;border:1px solid #d8d8d8;border-top:none"></div><svg style="left:1459px;top:994px" width="15" height="12" viewBox="0 0 15 12"><path d="M0.7 0.7H6.5V9.3H0.7Z M7.5 0.7H13.3V9.3H7.5Z" fill="#f0f0f4" stroke="#333" stroke-width="1.4"/><rect x="6.2" y="0" width="1.8" height="11" fill="#333"/></svg><span class="ts" style="left:1479px;top:992.64px;font-size:12px;color:#1e1e1e">Librarie...</span><svg style="left:1542px;top:994px" width="14" height="12" viewBox="0 0 14 12"><path d="M0 1.5H5.5L6.5 0.3H13V11H0Z" fill="#dcb46e"/><rect x="6.2" y="1" width="6" height="1" fill="#fff"/></svg><span class="ts" style="left:1561px;top:992.64px;font-size:12px;color:#1e1e1e;transform:scaleX(0.94);transform-origin:0 0">Files M...</span><svg style="left:1623px;top:995px" width="11" height="11" viewBox="0 0 11 11"><rect x="0" y="0" width="4" height="3.5" fill="#333"/><rect x="6" y="0" width="4" height="3.5" fill="#333"/><rect x="0" y="6" width="10" height="4" fill="#333"/></svg><span class="ts" style="left:1641px;top:992.64px;font-size:12px;color:#1e1e1e">Modul...</span><svg style="left:1698px;top:993px" width="15" height="15" viewBox="0 0 15 15"><rect x="0" y="0.2" width="14" height="1.8" fill="#333"/><rect x="0" y="4.2" width="10" height="1.8" fill="#333"/><rect x="0" y="8.2" width="12" height="1.8" fill="#333"/><rect x="0" y="12.2" width="7" height="1.8" fill="#333"/></svg><span class="ts" style="left:1718px;top:992.64px;font-size:12px;color:#7a3b8c">Logs</span><svg style="left:1756px;top:993px" width="15" height="14" viewBox="0 0 15 14"><circle cx="8.5" cy="5.2" r="3.8" fill="none" stroke="#333" stroke-width="2"/><path d="M5.8 8L2 12.2" stroke="#333" stroke-width="2.6" stroke-linecap="round"/></svg><span class="ts" style="left:1776px;top:992.64px;font-size:12px;color:#1e1e1e">Quick...</span><svg style="left:1836px;top:994px" width="13" height="13" viewBox="0 0 13 13"><rect x="3" y="1" width="5" height="3.5" fill="#333"/><rect x="9.5" y="1" width="2.5" height="5.5" fill="#333"/><circle cx="5" cy="7.5" r="2.3" fill="#f0f0f0" stroke="#1a5fb4" stroke-width="1.4"/><path d="M3.3 9.2L1.2 11.5" stroke="#1a5fb4" stroke-width="1.8"/></svg><span class="ts" style="left:1856px;top:992.64px;font-size:12px;color:#1e1e1e">Find All...</span>
<div style="left:0px;top:1017px;width:1920px;height:1px;background:#c4c4c4"></div>
<div style="left:0px;top:1018px;width:1920px;height:21px;background:#f7f7f7"></div>
<div style="left:0px;top:1039px;width:1920px;height:1px;background:#fff"></div>
<span class="ts" style="left:10px;top:1023.14px;font-size:12px;color:#5a5a5a;transform:scaleX(0.966);transform-origin:0 0">B4J-Bridge: Disconnected</span>
<span class="ts" style="left:164.5px;top:1023.14px;font-size:12px;color:#5a5a5a;transform:scaleX(0.961);transform-origin:0 0">11/28/2016 10:55:18 AM</span>
<span class="ts" style="left:298.5px;top:1023.14px;font-size:12px;color:#5a5a5a;transform:scaleX(0.92);transform-origin:0 0">File Saved.</span>
<div style="left:0;top:1040px;width:1920px;height:40px;background:#000"></div><svg style="left:1480px;top:1040px" width="440" height="40" viewBox="0 0 440 40"><defs><linearGradient id="tbg" x1="0" y1="0" x2="1" y2="0"><stop offset="0" stop-color="#1c150d"/><stop offset="0.4" stop-color="#241b11"/><stop offset="1" stop-color="#1f1710"/></linearGradient><filter id="tbb" x="-0.1" y="-0.5" width="1.2" height="2"><feGaussianBlur stdDeviation="2"/></filter></defs><path d="M27 42L90 -2H442V42Z" fill="#211810" filter="url(#tbb)"/></svg><div style="left:197px;top:1040px;width:48px;height:40px;background:#333"></div><div style="left:241px;top:1040px;width:4px;height:40px;background:#2a2a2a;border-left:1px solid #1e1e1e"></div><svg style="left:15px;top:1051px" width="18" height="18" viewBox="0 0 18 18"><path d="M0 2.6L7 1.6V8.3H0Z M8 1.4L17 0V8.3H8Z M0 9.3H7V16L0 15Z M8 9.3H17V17.6L8 16.2Z" fill="#fff"/></svg><svg style="left:63px;top:1049px" width="22" height="23" viewBox="0 0 22 23"><path d="M2.2 8.5C3.5 4 7 1 12 1C17.5 1 21 5 21 10.5V13H7.2C7.5 17 10.5 19 14 19C16.3 19 18.5 18.2 20 17V20.8C18.3 21.8 15.8 22.5 13 22.5C7 22.5 3 18.5 3 13C3 10 4.5 7.5 7.5 6C5.5 6 3.5 7 2.2 8.5Z M7.6 9.8H15.8C15.6 7.2 14 5.6 11.6 5.6C9.3 5.6 7.9 7.3 7.6 9.8Z" fill="#1877d5"/></svg><svg style="left:111px;top:1050px" width="23" height="20" viewBox="0 0 23 20"><defs><linearGradient id="fg" x1="0" y1="0" x2="0" y2="1"><stop offset="0" stop-color="#f6d77a"/><stop offset="1" stop-color="#fbe39a"/></linearGradient><linearGradient id="fb" x1="0" y1="0" x2="0" y2="1"><stop offset="0" stop-color="#38c0f8"/><stop offset="1" stop-color="#1898e8"/></linearGradient></defs><path d="M1 1H7.5L9 2.5H22V19H1Z" fill="#f0c850"/><rect x="2" y="1.8" width="5" height="1.6" fill="#fff"/><rect x="1" y="3.5" width="21" height="15.5" fill="url(#fg)"/><path d="M5 11H19V19H15.5V14.5H8.5V19H5Z" fill="url(#fb)"/></svg><svg style="left:163px;top:1048px" width="19" height="24" viewBox="0 0 19 24"><rect x="0" y="0" width="18" height="24" fill="#fff"/><rect x="2" y="2" width="14" height="4" fill="#000"/><g fill="#000"><path d="M2.5 8H5.5L2.5 11Z"/><path d="M7.5 8H10.5L7.5 11Z"/><path d="M12.5 8H15.5L12.5 11Z"/><path d="M2.5 13H5.5L2.5 16Z"/><path d="M7.5 13H10.5L7.5 16Z"/><path d="M12.5 13H15.5L12.5 16Z"/><path d="M2.5 18H5.5L2.5 21Z"/><path d="M7.5 18H10.5L7.5 21Z"/><path d="M12.5 18H15.5L12.5 21Z"/></g></svg><div style="left:209px;top:1048px;width:24px;height:24px;background:#fff"></div><div style="left:211px;top:1063px;width:21px;height:4px;background:radial-gradient(ellipse at center,#d8d8d8 0%,#ffffff 70%)"></div><span class="ts" style="left:211.5px;top:1052.7px;font-size:12px;color:#e86cc4;font-weight:normal;transform:scaleX(0.85);transform-origin:0 0">B4J</span><div style="left:258px;top:1048px;width:24px;height:24px;background:#fff"></div><div style="left:259px;top:1063px;width:22px;height:4px;background:radial-gradient(ellipse at center,#d8d8d8 0%,#ffffff 70%)"></div><span class="ts" style="left:259px;top:1052.7px;font-size:12px;color:#30c8d0;transform:scaleX(0.8);transform-origin:0 0">B4A</span><svg style="left:307px;top:1047px" width="24" height="26" viewBox="0 0 24 26"><defs><linearGradient id="ng" x1="0" y1="0" x2="0" y2="1"><stop offset="0" stop-color="#e8f0d8"/><stop offset="0.35" stop-color="#d8f080"/><stop offset="1" stop-color="#30b020"/></linearGradient></defs><path d="M1.5 1.5H14L18.5 6V24.5H1.5Z" fill="url(#ng)" stroke="#909890" stroke-width="1"/><path d="M14 1.5V6H18.5" fill="#f0f0f0" stroke="#909890" stroke-width="0.8"/><rect x="2" y="2.5" width="12" height="3" fill="#e8ecf0"/><rect x="5" y="7" width="1.6" height="7.5" fill="#222"/><rect x="7.5" y="10" width="1.5" height="1.2" fill="#222"/><rect x="10" y="10" width="1.5" height="1.2" fill="#222"/><path d="M22.8 1.5L14.5 18.5L13.8 21.5L16 19.5L24 3Z" fill="#f0b020" stroke="#a06810" stroke-width="0.6"/><path d="M22.5 1L24.5 2.5L24 3L22.8 1.5Z" fill="#d04040"/></svg><div style="left:103px;top:1078px;width:40px;height:2px;background:#76b9ed"></div><div style="left:197px;top:1078px;width:48px;height:2px;background:#76b9ed"></div><div style="left:250px;top:1078px;width:40px;height:2px;background:#76b9ed"></div><div style="left:299px;top:1078px;width:40px;height:2px;background:#76b9ed"></div><svg style="left:1721px;top:1055px" width="14" height="9" viewBox="0 0 14 9"><path d="M1 8L7 2L13 8" stroke="#fff" stroke-width="1.1" fill="none"/></svg><svg style="left:1743px;top:1053px" width="19" height="13" viewBox="0 0 19 13"><path d="M2.5 1V3.5M5.5 1V3.5" stroke="#fff" stroke-width="1"/><path d="M1.5 3.5H6.5V5.5C6.5 7 5.5 7.5 4 7.5C2.5 7.5 1.5 7 1.5 5.5Z" fill="none" stroke="#fff" stroke-width="1"/><path d="M4 7.5V12" stroke="#fff" stroke-width="1"/><path d="M6.5 3.5H16.5V11.5H5.5" fill="none" stroke="#fff" stroke-width="1"/><rect x="7" y="5" width="8" height="5" fill="#fff"/><rect x="17" y="6" width="1.3" height="3" fill="#fff"/></svg><svg style="left:1770px;top:1054px" width="14" height="14" viewBox="0 0 14 14"><path d="M1.5 13A11.5 11.5 0 0 1 13 1.5M4.5 13A8.5 8.5 0 0 1 13 4.5M7.5 13A5.5 5.5 0 0 1 13 7.5" stroke="#fff" stroke-width="1.1" fill="none"/><rect x="10.5" y="10.5" width="3" height="3" fill="#fff"/></svg><svg style="left:1791px;top:1052px" width="18" height="16" viewBox="0 0 18 16"><path d="M1.5 5.5H4L9.5 1.5V14.5L4 10.5H1.5Z" fill="none" stroke="#fff" stroke-width="1.1"/><path d="M11.5 6A2.5 2.5 0 0 1 11.5 10M13.5 4A5 5 0 0 1 13.5 12M15.5 2A7.8 7.8 0 0 1 15.5 14" stroke="#fff" stroke-width="1.1" fill="none"/></svg><svg style="left:1815px;top:1052px" width="18" height="17" viewBox="0 0 18 17"><path d="M1 0H17V13H11.5L9 16L6.5 13H1Z" fill="#fff"/><path d="M4 3.5H14M4 6.5H14M4 9.5H11" stroke="#000" stroke-width="1"/></svg><span class="ts" style="left:1862.5px;top:1044.14px;font-size:12px;color:#fff;transform:scaleX(0.92);transform-origin:0 0">10:59</span><span class="ts" style="left:1845px;top:1061.14px;font-size:12px;color:#fff">28/11/2016</span><div style="left:1914px;top:1040px;width:1px;height:40px;background:#3a3a3a"></div>
</body></html>
